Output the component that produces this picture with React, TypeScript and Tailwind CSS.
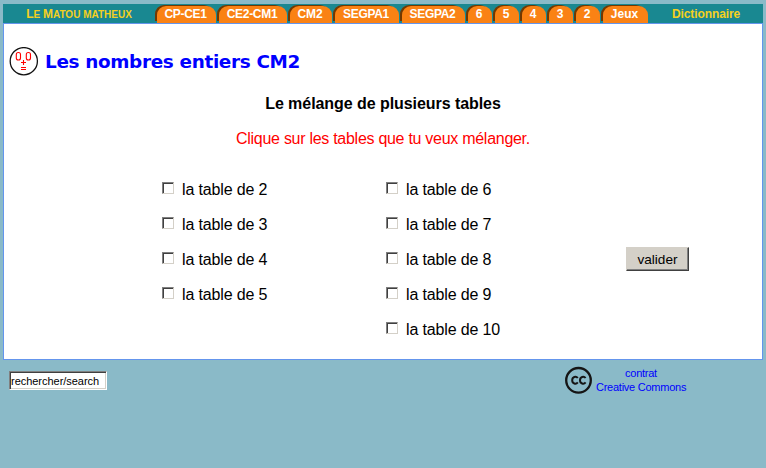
const tabs = [
  { label: 'CP-CE1', box: 'w-[61px]', track: 'tracking-[-0.3px]' },
  { label: 'CE2-CM1', box: 'w-[70px]', track: 'tracking-[-0.3px]' },
  { label: 'CM2', box: 'w-[44px]', track: 'tracking-[-0.1px]' },
  { label: 'SEGPA1', box: 'w-[66px]', track: 'tracking-[-0.3px]' },
  { label: 'SEGPA2', box: 'w-[65px]', track: 'tracking-[-0.3px]' },
  { label: '6', box: 'w-[26px]', track: '' },
  { label: '5', box: 'w-[26px]', track: '' },
  { label: '4', box: 'w-[26px]', track: '' },
  { label: '3', box: 'w-[26px]', track: '' },
  { label: '2', box: 'w-[26px]', track: '' },
  { label: 'Jeux', box: 'w-[47px]', track: '' },
];

function Tab({ label, box, track }: { label: string; box: string; track: string }) {
  return (
    <a className={`relative block h-[18px] ${box}`}>
      <span className="absolute top-0 left-0 h-4 w-[calc(100%-3px)] rounded-t-[9px] bg-[#733800]" />
      <span className={`absolute top-px right-0 left-[2px] h-[17px] rounded-t-[9px] bg-[#fa8214] pr-[2px] text-center text-[12px] leading-[17px] font-bold whitespace-nowrap text-white ${track}`}>
        {label}
      </span>
    </a>
  );
}

function CatFace() {
  return (
    <svg className="size-[30px] shrink-0" viewBox="0 0 30 30" fill="none">
      <circle cx="14.8" cy="14.2" r="13.6" stroke="#111" strokeWidth="1.3" />
      <g stroke="#f00" strokeWidth="1.1">
        <rect x="7.3" y="5.5" width="4.2" height="7.5" rx="2" />
        <rect x="17.3" y="5.5" width="4.2" height="7.5" rx="2" />
        <path d="M12 15.5h5M14.5 13v5M12 20.5h5M12 22.5h5" />
      </g>
    </svg>
  );
}

function Choice({ n }: { n: number }) {
  return (
    <label className="flex h-[35px] items-start text-[16px] leading-[18px] tracking-[-0.15px]">
      <span className="mt-[2px] mr-[8px] h-3 w-3 border border-t-[#808080] border-r-[#d4d0c8] border-b-[#d4d0c8] border-l-[#808080] bg-white shadow-[inset_1px_1px_0_#404040]" />
      <span className="pt-px whitespace-nowrap">la table de {n}</span>
    </label>
  );
}

export default function App() {
  return (
    <div className="h-[468px] w-[766px] overflow-hidden bg-[#8abac8] px-[3px] pt-1 font-['Liberation_Sans',Arial,sans-serif] text-black">
      <nav className="flex h-[19px] w-[760px] bg-[#198891] pt-px">
        <a className="w-[152px] text-center text-[10px] leading-[18px] font-bold whitespace-nowrap text-[#f5d020] uppercase">
          <span className="text-[12px]">L</span>e <span className="text-[12px]">M</span>atou matheux
        </a>
        <div className="flex gap-px">
          {tabs.map((t) => <Tab key={t.label} {...t} />)}
        </div>
        <a className="ml-[24px] text-[12px] leading-[18px] font-bold tracking-[-0.1px] text-[#f5d020]">Dictionnaire</a>
      </nav>
      <main className="h-[337px] w-[760px] border border-[#6495ed] bg-white">
        <header className="flex h-[53px] items-end pl-[5px]">
          <CatFace />
          <h1 className="ml-[6px] h-[27px] font-['DejaVu_Sans',Verdana,sans-serif] text-[18.4px] leading-[24px] font-bold tracking-[-0.33px] whitespace-nowrap text-[#00f]">Les nombres entiers CM2</h1>
        </header>
        <h2 className="mt-[18px] text-center text-[16px] leading-[18px] font-bold tracking-[-0.06px]">Le mélange de plusieurs tables</h2>
        <p className="mt-[17px] text-center text-[16px] leading-[18px] tracking-[-0.28px] text-[#f00]">Clique sur les tables que tu veux mélanger.</p>
        <form className="mt-[32px] flex pl-[158px]">
          <div className="w-[224px]">{[2, 3, 4, 5].map((n) => <Choice key={n} n={n} />)}</div>
          <div className="w-[240px]">{[6, 7, 8, 9, 10].map((n) => <Choice key={n} n={n} />)}</div>
          <button type="button" className="mt-[67px] h-[24px] w-[63px] border border-t-[#d4d0c8] border-r-[#404040] border-b-[#404040] border-l-[#d4d0c8] bg-[#d4d0c8] pt-px text-[13.6px] leading-[20px] shadow-[inset_-1px_-1px_0_#808080]">valider</button>
        </form>
      </main>
      <footer className="flex pl-[6px]">
        <div className="mt-[11px] h-[19px] w-[98px] border border-t-[#808080] border-r-white border-b-white border-l-[#808080] bg-white pl-px text-[11px] leading-[18px] tracking-[-0.03px] whitespace-nowrap shadow-[inset_1px_1px_0_#404040,inset_-1px_-1px_0_#d4d0c8]">rechercher/search</div>
        <svg className="mt-[6px] ml-[458px] size-[28px]" viewBox="0 0 28 28" fill="none">
          <circle cx="13.5" cy="14.3" r="12.3" stroke="#151515" strokeWidth="2.3" />
          <path d="M12.8 12C11 9.7 7.2 10.8 7.2 14.2s3.8 4.5 5.6 2.2M20.6 12c-1.8-2.3-5.6-1.2-5.6 2.2s3.8 4.5 5.6 2.2" stroke="#151515" strokeWidth="2" />
        </svg>
        <a className="mt-[6px] ml-[3px] w-[90px] text-center text-[11px] leading-[14px] tracking-[-0.25px] whitespace-nowrap text-[#00f]">contrat<br />Creative Commons</a>
      </footer>
    </div>
  );
}
